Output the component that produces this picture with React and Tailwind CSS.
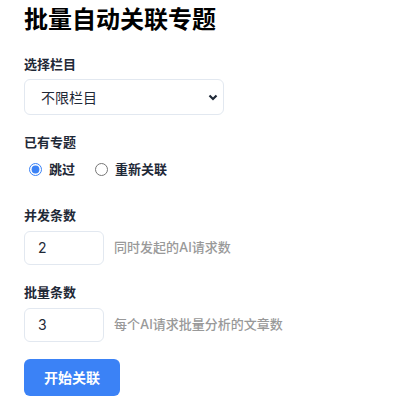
import React, { useState } from "react";

const App = () => {
	const [mode, setMode] = useState("skip");

	return (
		<div className="min-h-[400px] bg-white px-6 pt-[5px] font-['Inter','Noto_Sans_CJK_SC',sans-serif] text-[#1f2937]">
			<h1 className="text-[24px] font-bold leading-[30px] text-black">批量自动关联专题</h1>

			<div className="mt-[19px]">
				<label className="block text-[13px] font-bold leading-5 text-[#1f2937]">选择栏目</label>
				<div className="relative mt-[5px] w-[200px]">
					<select className="h-[36px] w-full appearance-none rounded-md border border-[#e2e8f0] bg-white pl-4 pr-8 text-[14px] text-[#1f2937] outline-none">
						<option>不限栏目</option>
					</select>
					<svg
						className="pointer-events-none absolute right-[6px] top-[14px] h-[9px] w-[10px] text-[#1f2937]"
						viewBox="0 0 10 7"
						fill="none"
						stroke="currentColor"
						strokeWidth="2.2"
					>
						<path d="M1.5 1.5l3.5 3.5 3.5-3.5" />
					</svg>
				</div>
			</div>

			<div className="mt-[17px]">
				<label className="block text-[13px] font-bold leading-5">已有专题</label>
				<div className="mt-[8px] flex items-center gap-[20px] pl-[5px] text-[13px] font-bold">
					<label className="flex items-center gap-[7px]">
						<input
							type="radio"
							name="mode"
							checked={mode === "skip"}
							onChange={() => setMode("skip")}
							className="m-0 h-[13px] w-[13px] accent-[#3b82f6]"
						/>
						跳过
					</label>
					<label className="flex items-center gap-[7px]">
						<input
							type="radio"
							name="mode"
							checked={mode === "relink"}
							onChange={() => setMode("relink")}
							className="m-0 h-[13px] w-[13px] accent-[#3b82f6]"
						/>
						重新关联
					</label>
				</div>
			</div>

			<div className="mt-[25px]">
				<label className="block text-[13px] font-bold leading-5">并发条数</label>
				<div className="mt-[6px] flex items-center gap-[10px]">
					<input
						type="number"
						defaultValue={2}
						className="h-[34px] w-[80px] rounded-md border border-[#e2e8f0] bg-white px-[13px] text-[14px] text-[#1f2937] outline-none"
					/>
					<span className="text-[13px] font-medium text-[#999999]">同时发起的AI请求数</span>
				</div>
			</div>

			<div className="mt-[17px]">
				<label className="block text-[13px] font-bold leading-5">批量条数</label>
				<div className="mt-[6px] flex items-center gap-[10px]">
					<input
						type="number"
						defaultValue={3}
						className="h-[34px] w-[80px] rounded-md border border-[#e2e8f0] bg-white px-[13px] text-[14px] text-[#1f2937] outline-none"
					/>
					<span className="text-[13px] font-medium text-[#999999]">每个AI请求批量分析的文章数</span>
				</div>
			</div>

			<button className="mt-[17px] h-[37px] w-[96px] rounded-md bg-[#3b82f6] text-[14px] font-bold text-white">
				开始关联
			</button>
		</div>
	);
};

export default App;
